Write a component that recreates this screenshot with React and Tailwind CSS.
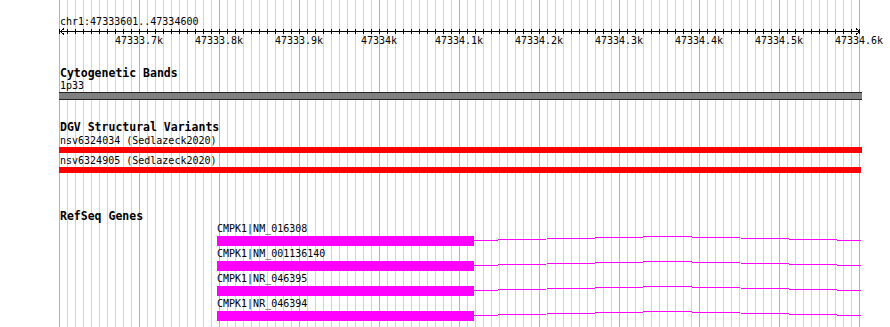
const GRID = Array.from({ length: 101 }, (_, i) => ({ x: 59.5 + 8 * i, major: i % 10 === 0 }));

const SCALE = [
  "47333.7k",
  "47333.8k",
  "47333.9k",
  "47334k",
  "47334.1k",
  "47334.2k",
  "47334.3k",
  "47334.4k",
  "47334.5k",
  "47334.6k",
];

const GENES = ["CMPK1|NM_016308", "CMPK1|NM_001136140", "CMPK1|NR_046395", "CMPK1|NR_046394"];

const Grid = () => (
  <svg className="absolute left-0 top-0" width="890" height="327" shapeRendering="crispEdges">
    {GRID.map((g) => (
      <line
        key={g.x}
        x1={g.x}
        x2={g.x}
        y1="0"
        y2="327"
        stroke={g.major ? "#8cbfe6" : "#ace4e6"}
        strokeWidth="1"
      />
    ))}
  </svg>
);

const Ruler = () => (
  <svg width="890" height="19" shapeRendering="crispEdges" className="block">
    <line x1="60" x2="860" y1="3.5" y2="3.5" stroke="#000" />
    {GRID.map((g) => (
      <line key={g.x} x1={g.x} x2={g.x} y1="1" y2="6" stroke="#000" />
    ))}
    <polyline points="64,0.5 60.5,3.5 64,6.5" fill="none" stroke="#000" />
    <polyline points="856,0.5 859.5,3.5 856,6.5" fill="none" stroke="#000" />
    {SCALE.map((s, i) => (
      <text
        key={s}
        x={139 + 80 * i}
        y="15.5"
        textAnchor="middle"
        fontSize="10"
        fontFamily="'DejaVu Sans Mono', monospace"
        fill="#000"
      >
        {s}
      </text>
    ))}
  </svg>
);

const Title = ({ children, className = "" }) => (
  <div className={`pl-[60px] h-[13px] text-[11.5px] leading-[13px] font-bold ${className}`}>{children}</div>
);

const Label = ({ children, className = "" }) => (
  <div className={`text-[10px] leading-[13px] h-[13px] whitespace-pre ${className}`}>{children}</div>
);

const Gene = ({ name, first }) => (
  <div className={first ? "" : "mt-[2px]"}>
    <div className="relative z-10 pl-[217px] h-[13px] text-[10px] leading-[11px] whitespace-pre">{name}</div>
    <div className="flex pl-[217px] h-[10px]">
      <div className="w-[257px] h-[10px] bg-[#ff00ff]" />
      <svg width="387" height="10" shapeRendering="crispEdges" className="block">
        <polyline points="0,4.5 193.5,0.5 387,4.5" fill="none" stroke="#ff00ff" strokeWidth="1" />
      </svg>
    </div>
  </div>
);

export default function App() {
  return (
    <div className="relative w-[890px] h-[327px] overflow-hidden bg-white text-black font-['DejaVu_Sans_Mono',monospace]">
      <Grid />
      <div className="relative flex flex-col pt-[15px]">
        <Label className="pl-[60px]">chr1:47333601..47334600</Label>
        <Ruler />

        {/* cytogenetic bands */}
        <Title className="mt-[20px]">Cytogenetic Bands</Title>
        <div className="pl-[60px] h-[12px] text-[10px] leading-[12px]">1p33</div>
        <div className="ml-[59px] w-[803px] h-[8px] bg-[#808080] border-y border-[#222]" />

        {/* DGV */}
        <Title className="mt-[21px]">DGV Structural Variants</Title>
        <Label className="pl-[60px]">nsv6324034 (Sedlazeck2020)</Label>
        <div className="ml-[59px] w-[803px] h-[6px] bg-[#ff0000]" />
        <div className="pl-[60px] mt-[2px] h-[12px] text-[10px] leading-[12px]">nsv6324905 (Sedlazeck2020)</div>
        <div className="ml-[59px] w-[802px] h-[6px] bg-[#ff0000]" />

        {/* refseq */}
        <Title className="mt-[37px]">RefSeq Genes</Title>
        {GENES.map((g, i) => (
          <Gene key={g} name={g} first={i === 0} />
        ))}
      </div>
    </div>
  );
}
